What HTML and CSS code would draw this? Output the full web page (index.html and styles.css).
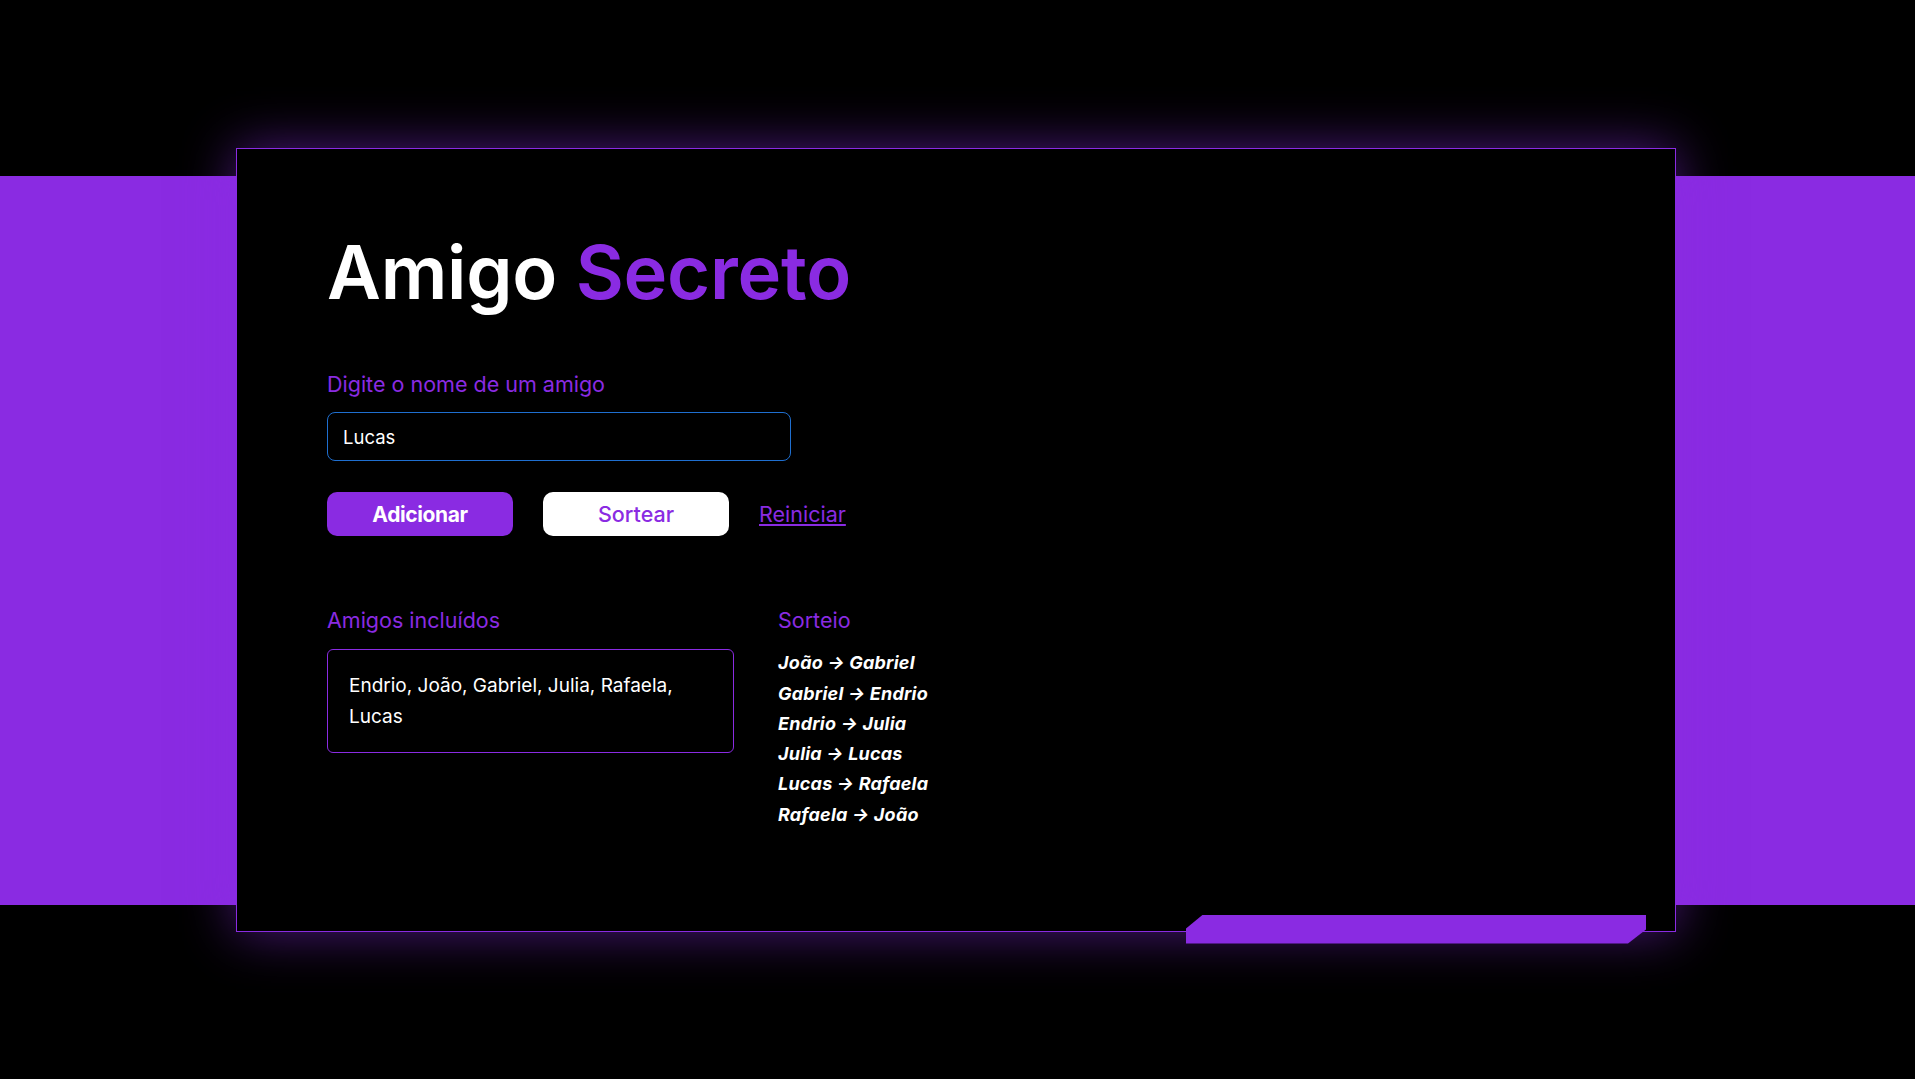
FILE: index.html
```html
<!DOCTYPE html>
<html lang="pt-BR">
<head>
<meta charset="UTF-8">
<title>Amigo Secreto</title>
<link rel="stylesheet" href="styles.css">
</head>
<body>
  <main class="card">
    <h1 class="title">Amigo <span class="accent">Secreto</span></h1>

    <section class="form">
      <label class="label" for="amigo">Digite o nome de um amigo</label>
      <input id="amigo" class="input" type="text" value="Lucas">
      <div class="actions">
        <button class="btn btn-primary">Adicionar</button>
        <button class="btn btn-secondary">Sortear</button>
        <a class="link" href="#">Reiniciar</a>
      </div>
    </section>

    <section class="results">
      <div class="col col-friends">
        <h2 class="subtitle">Amigos incluídos</h2>
        <div class="friends-box">Endrio, João, Gabriel, Julia, Rafaela, Lucas</div>
      </div>
      <div class="col col-draw">
        <h2 class="subtitle">Sorteio</h2>
        <ul class="draw-list">
          <li>João → Gabriel</li>
          <li>Gabriel → Endrio</li>
          <li>Endrio → Julia</li>
          <li>Julia → Lucas</li>
          <li>Lucas → Rafaela</li>
          <li>Rafaela → João</li>
        </ul>
      </div>
    </section>

    <div class="deco-bar"></div>
  </main>
</body>
</html>
```

FILE: styles.css
```css
html, body {
  margin: 0;
  padding: 0;
}

body {
  height: 100vh;
  background: linear-gradient(to bottom,
    #000 0, #000 176px,
    #8a2be2 176px, #8a2be2 905px,
    #000 905px, #000 100%);
  display: flex;
  align-items: center;
  justify-content: center;
  font-family: "Inter", "Noto Sans", sans-serif;
  color: #fff;
}

.card {
  position: relative;
  box-sizing: border-box;
  width: 1440px;
  height: 784px;
  margin-right: 3px;
  background: #000;
  border: 1px solid #8a2be2;
  box-shadow: 0 0 50px rgba(138, 43, 226, 0.55);
  padding: 79px 90px 0 90px;
}

.title {
  margin: 0;
  font-family: "Inter", sans-serif;
  font-weight: 600;
  font-size: 74px;
  line-height: 88.8px;
  letter-spacing: -0.2px;
  color: #fff;
}

.accent {
  color: #8a2be2;
}

.form {
  margin-top: 55px;
  display: flex;
  flex-direction: column;
}

.label {
  font-size: 21.5px;
  color: #8a2be2;
  line-height: 26px;
}

.input {
  margin-top: 15px;
  box-sizing: border-box;
  width: 464px;
  height: 49px;
  background: #000;
  border: 1px solid #1f6fd0;
  border-radius: 8px;
  color: #fff;
  font-family: "Inter", sans-serif;
  font-size: 18.5px;
  padding: 0 15px;
  outline: none;
}

.actions {
  margin-top: 31px;
  display: flex;
  align-items: center;
  gap: 30px;
}

.btn {
  width: 186px;
  height: 44px;
  border: none;
  border-radius: 10px;
  font-family: "Inter", sans-serif;
  font-size: 21px;
  cursor: pointer;
}

.btn-primary {
  background: #8a2be2;
  color: #fff;
  font-weight: 700;
  letter-spacing: -0.4px;
}

.btn-secondary {
  background: #fff;
  color: #8a2be2;
  font-weight: 500;
  font-size: 21.5px;
}

.link {
  color: #8a2be2;
  font-size: 21.5px;
  text-decoration: underline;
}

.results {
  margin-top: 71px;
  display: flex;
  gap: 44px;
}

.subtitle {
  margin: 0;
  font-size: 21.5px;
  font-weight: 400;
  line-height: 26px;
  color: #8a2be2;
}

.col-friends {
  width: 407px;
}

.friends-box {
  margin-top: 16px;
  box-sizing: border-box;
  width: 407px;
  height: 104px;
  border: 1px solid #8a2be2;
  border-radius: 6px;
  padding: 21px 21px 0 21px;
  font-size: 19px;
  line-height: 30.5px;
}

.draw-list {
  list-style: none;
  margin: 15px 0 0 0;
  padding: 0;
  font-size: 18px;
  font-weight: 700;
  font-style: italic;
  line-height: 30.3px;
  letter-spacing: 0.2px;
}

.deco-bar {
  position: absolute;
  left: 949px;
  top: 766px;
  width: 460px;
  height: 29px;
  background: #8a2be2;
  clip-path: polygon(17px 0, 100% 0, 100% 15px, calc(100% - 18px) 100%, 0 100%, 0 14px);
}
```
